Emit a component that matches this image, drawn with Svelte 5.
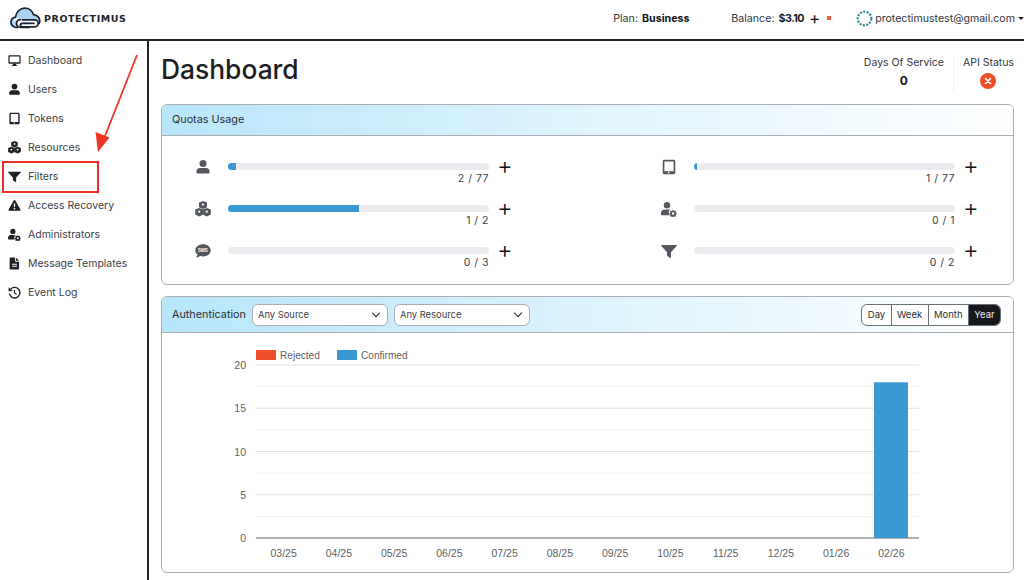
<script lang="ts">
  const nav = [
    { label: "Dashboard", icon: "desktop" },
    { label: "Users", icon: "user" },
    { label: "Tokens", icon: "tablet" },
    { label: "Resources", icon: "cubes" },
    { label: "Filters", icon: "filter" },
    { label: "Access Recovery", icon: "warning" },
    { label: "Administrators", icon: "usercog" },
    { label: "Message Templates", icon: "file" },
    { label: "Event Log", icon: "history" },
  ];

  const quotas = [
    { icon: "user", used: 2, total: 77, pct: 3 },
    { icon: "tablet", used: 1, total: 77, pct: 1.3 },
    { icon: "cubes", used: 1, total: 2, pct: 50 },
    { icon: "usercog", used: 0, total: 1, pct: 0 },
    { icon: "sms", used: 0, total: 3, pct: 0 },
    { icon: "filter", used: 0, total: 2, pct: 0 },
  ];

  const ranges = ["Day", "Week", "Month", "Year"];
  const months = ["03/25", "04/25", "05/25", "06/25", "07/25", "08/25", "09/25", "10/25", "11/25", "12/25", "01/26", "02/26"];

  // chart geometry, in the svg's own units
  const plotLeft = 94;
  const plotWidth = 663;
  const plotTop = 32;
  const plotHeight = 173;
  const band = plotWidth / months.length;
  const yOf = (v: number) => plotTop + plotHeight - (v / 20) * plotHeight;
  const grid = [0, 2.5, 5, 7.5, 10, 12.5, 15, 17.5, 20];
</script>

{#snippet icon(name: string)}
  <svg class="icon" viewBox="0 0 16 16" aria-hidden="true">
    {#if name === "desktop"}
      <path d="M1.6 1.5h12.8c.6 0 1.1.5 1.1 1.1v8.3c0 .6-.5 1.1-1.1 1.100H1.600c-.6 0-1.100-.5-1.100-1.100V2.600c0-.6.5-1.100 1.100-1.100zm.4 1.600v6.900h12V3.100z" fill-rule="evenodd" />
      <path d="M6.200 12h3.600l.4 1.800h1.300v1H4.500v-1h1.300z" />
    {:else if name === "user"}
      <circle cx="8" cy="4.400" r="3.500" />
      <path d="M4.800 9h6.400c1.900 0 3.300 1.500 3.300 3.300v1.200c0 .6-.5 1.100-1.100 1.100H2.600c-.6 0-1.100-.5-1.100-1.100v-1.200C1.500 10.500 2.900 9 4.800 9z" />
    {:else if name === "tablet"}
      <path d="M3.300.8h9.400c.9 0 1.600.7 1.600 1.600v11.200c0 .9-.7 1.600-1.600 1.600H3.300c-.9 0-1.600-.7-1.600-1.600V2.400c0-.9.7-1.600 1.600-1.600zm.1 1.700v9.800h9.200V2.500zM8 12.800a.8.800 0 1 0 0 1.500.8.800 0 0 0 0-1.500z" fill-rule="evenodd" />
    {:else if name === "cubes"}
      <path d="M8 0l4 1.600v4.700L8 8 4 6.300V1.600z" />
      <path d="M4.200 7l4 1.600v4.900l-4 1.900-4-1.900V8.600z" />
      <path d="M11.800 7l4 1.600v4.900l-4 1.900-4-1.900V8.600z" />
      <g fill="#fff"><circle cx="8" cy="3.600" r="1.100" /><circle cx="4.200" cy="10.700" r="1.100" /><circle cx="11.800" cy="10.700" r="1.100" /></g>
    {:else if name === "filter"}
      <path d="M.8 2h14.400c.5 0 .8.600.5 1L10 9.300v5c0 .5-.6.8-1 .5l-2.600-1.800a.7.700 0 0 1-.4-.6V9.300L.3 3c-.3-.4 0-1 .5-1z" />
    {:else if name === "warning"}
      <path d="M8 1.200c.4 0 .8.200 1 .6l6.300 11c.4.700-.1 1.600-1 1.600H1.700c-.9 0-1.400-.9-1-1.600l6.300-11c.2-.4.600-.6 1-.6zM7.100 5.500l.2 4.300h1.400l.2-4.300zM8 10.700a1.050 1.050 0 1 0 0 2.100 1.050 1.050 0 0 0 0-2.100z" fill-rule="evenodd" />
    {:else if name === "usercog"}
      <circle cx="6" cy="4.200" r="3.200" />
      <path d="M3.600 8.500h4.800c.3 0 .6 0 .8.100a3.800 3.800 0 0 0-.5 5.700H1.100c-.6 0-1.100-.5-1.100-1.100v-1.300c0-1.900 1.600-3.400 3.600-3.400z" />
      <path d="M12.300 8.200l.3 1 .9.300.9-.5.900.9-.5.900.3.900 1 .3v1.200l-1 .3-.3.900.5.900-.9.900-.9-.5-.9.300-.3 1H11.400l-.3-1-.9-.3-.9.500-.9-.9.500-.9-.3-.9-1-.3v-1.200l1-.3.3-.9-.5-.9.900-.9.900.5.900-.3.300-1zM11.900 11a1.400 1.400 0 1 0 0 2.800 1.400 1.400 0 0 0 0-2.800z" fill-rule="evenodd" transform="translate(1.600 1.600) scale(.88)" />
    {:else if name === "file"}
      <path d="M3.200.6h5.600v4.200c0 .5.400.9.900.9h3.900v8.500c0 .6-.5 1.200-1.200 1.200H3.200c-.7 0-1.200-.6-1.200-1.200V1.800C2 1.100 2.500.6 3.200.6zM9.900.8l3.600 3.800H9.900zM5 8.400v1.100h6V8.400zm0 2.500V12h6v-1.100z" fill-rule="evenodd" />
    {:else if name === "history"}
      <path d="M3.400 3.700A6.500 6.500 0 1 1 1.700 9.500" fill="none" stroke="currentColor" stroke-width="1.700" />
      <path d="M.8 1.600l5 4.700-5 .3z" />
      <path d="M8 4.700v3.900l2.600 1.600" fill="none" stroke="currentColor" stroke-width="1.500" />
    {:else if name === "sms"}
      <path d="M8 1.300c4.300 0 7.700 2.700 7.700 6.100s-3.400 6.100-7.700 6.100c-1 0-2-.1-2.900-.4-.9.700-2.300 1.500-4 1.500-.2 0-.3-.3-.1-.4.900-.9 1.400-1.900 1.500-2.700C1.100 10.500.3 9 .3 7.400c0-3.400 3.400-6.100 7.700-6.100z" />
      <text x="8" y="9.100" class="sms-text">SMS</text>
    {/if}
  </svg>
{/snippet}

<div class="page">
  <header class="topbar">
    <div class="brand">
      <svg class="logo" width="32" height="23" viewBox="0 0 32 23" aria-hidden="true">
        <path d="M8 20.500H6.500C3.400 20.500 1 18.200 1 15.300c0-2.600 1.900-4.700 4.500-5.100C6 5 10 1.200 14.800 1.200c4.100 0 7.600 2.700 8.700 6.400 3.500.2 6.300 2.900 6.300 6.200 0 1.100-.3 2.200-.9 3.100" fill="#a9d4f2" stroke="#1b2230" stroke-width="1.700" stroke-linejoin="round" />
        <path d="M3 14c1-3 4-4 6-3.500 2 .5 2 3 5 3h9c2.500 0 4.500 1 4.500 3" fill="#fff" stroke="none" opacity=".8" />
        <path d="M12.500 12.800h12c2.100 0 3.800 1.500 3.800 3.500s-1.700 3.500-3.800 3.500H12.500c-1.200 0-2.100-.8-2.100-1.700 0-1 .9-1.800 2.100-1.800h11.400M19 20.500h-8.500c-2.300 0-4-1.900-4-4.100 0-2.100 1.700-3.800 3.800-3.800" fill="#fff" stroke="#1b2230" stroke-width="1.700" stroke-linecap="round" />
      </svg>
      <span class="wordmark">PROTECTIMUS</span>
    </div>
    <div class="account">
      <div class="plan">Plan: <b>Business</b></div>
      <div class="balance">
        Balance: <b>$3.10</b>
        <span class="plus-small">+</span>
        <span class="red-dot"></span>
      </div>
      <div class="user-menu">
        <svg class="avatar" width="17" height="17" viewBox="0 0 18 18" aria-hidden="true">
          <circle cx="9" cy="9" r="7.200" fill="none" stroke="#3b8a99" stroke-width="2.400" stroke-dasharray="2.200 1.400" />
        </svg>
        <span>protectimustest@gmail.com</span>
        <span class="caret"></span>
      </div>
    </div>
  </header>

  <div class="body">
    <nav class="sidebar">
      {#each nav as item}
        <div class="nav-item">
          <span class="nav-icon">{@render icon(item.icon)}</span>
          <span>{item.label}</span>
        </div>
      {/each}
    </nav>

    <main class="content">
      <div class="title-row">
        <h1>Dashboard</h1>
        <div class="stats">
          <div class="stat">
            <div>Days Of Service</div>
            <div class="stat-value">0</div>
          </div>
          <div class="stat api">
            <div>API Status</div>
            <div class="status-bad">
              <svg width="8" height="8" viewBox="0 0 8 8" aria-hidden="true"><path d="M1.500 1.500l5 5m0-5l-5 5" stroke="#fff" stroke-width="1.600" stroke-linecap="round" /></svg>
            </div>
          </div>
        </div>
      </div>

      <section class="card quotas">
        <div class="card-head">Quotas Usage</div>
        <div class="quota-grid">
          {#each quotas as q}
            <div class="quota">
              <span class="quota-icon">{@render icon(q.icon)}</span>
              <div class="quota-main">
                <div class="track"><div class="fill" style:width="{q.pct}%"></div></div>
                <div class="quota-count">{q.used} / {q.total}</div>
              </div>
              <span class="plus">+</span>
            </div>
          {/each}
        </div>
      </section>

      <section class="card auth">
        <div class="card-head auth-head">
          <span>Authentication</span>
          <div class="select">Any Source<span class="chev"></span></div>
          <div class="select">Any Resource<span class="chev"></span></div>
          <div class="range-group">
            {#each ranges as r}
              <span class="range" class:active={r === "Year"}>{r}</span>
            {/each}
          </div>
        </div>
        <div class="chart">
          <svg width="851" height="240" viewBox="0 0 851 240" aria-label="Authentication chart">
            <rect x="94" y="17" width="20" height="10" fill="#ee4f2b" />
            <text x="118" y="26" class="legend">Rejected</text>
            <rect x="175" y="17" width="20" height="10" fill="#3a98d3" />
            <text x="199" y="26" class="legend">Confirmed</text>
            {#each grid as v, i}
              <line x1={plotLeft} x2={plotLeft + plotWidth} y1={yOf(v)} y2={yOf(v)} class={i === 0 ? "axis" : i % 2 === 0 ? "grid major" : "grid"} />
              {#if i % 2 === 0}
                <text x="84" y={yOf(v) + 4} class="tick end">{v}</text>
              {/if}
            {/each}
            {#each months as m, i}
              <text x={plotLeft + band * (i + 0.5)} y="224" class="tick mid">{m}</text>
            {/each}
            <rect x="712" y={yOf(18)} width="34" height={plotTop + plotHeight - yOf(18)} fill="#3a98d3" />
          </svg>
        </div>
      </section>
    </main>
  </div>

  <!-- annotation drawn over the screenshot -->
  <div class="callout"></div>
  <svg class="arrow" width="60" height="115" viewBox="0 0 60 115" aria-hidden="true">
    <path d="M47 3L15 84" stroke="#ee3524" stroke-width="1.800" fill="none" />
    <path d="M8 100L5.500 80 19.500 85.500z" fill="#ee3524" />
  </svg>
</div>

<style>
  :global(body) {
    margin: 0;
    background: #fff;
  }

  .page {
    position: relative;
    width: 1024px;
    height: 580px;
    overflow: hidden;
    font-family: Inter, "Liberation Sans", sans-serif;
    font-size: 10.500px;
    color: #24282e;
    background: #fff;
  }

  .topbar {
    display: flex;
    align-items: center;
    justify-content: space-between;
    height: 39px;
    border-bottom: 2px solid #23262b;
  }

  .brand {
    display: flex;
    align-items: center;
    gap: 2px;
    padding: 0 0 3px 10px;
  }

  .wordmark {
    font-family: "DejaVu Sans", sans-serif;
    font-weight: 700;
    font-size: 9.500px;
    letter-spacing: 0.550px;
    color: #20242c;
  }

  .account {
    display: flex;
    align-items: center;
    padding: 0 0 3px 0;
    color: #33373d;
    font-size: 10.700px;
  }

  .account b {
    color: #16181c;
    font-weight: 700;
    margin-left: 1px;
  }

  .plan {
    width: 118px;
  }

  .balance {
    display: flex;
    align-items: center;
    gap: 3px;
    width: 125px;
  }

  .balance b {
    letter-spacing: -0.500px;
  }

  .plus-small {
    font-size: 17px;
    line-height: 12px;
    color: #111;
    margin-left: 2px;
  }

  .red-dot {
    width: 4px;
    height: 4px;
    background: #ee5a33;
    margin-left: 4px;
  }

  .user-menu {
    display: flex;
    align-items: center;
    gap: 2px;
    font-size: 10.600px;
  }

  .caret {
    width: 0;
    height: 0;
    margin-left: 1px;
    border: 3px solid transparent;
    border-top-color: #222;
    border-bottom: 0;
  }

  .body {
    display: flex;
    height: 539px;
  }

  .sidebar {
    width: 149px;
    flex: none;
    box-sizing: border-box;
    border-right: 2px solid #23262b;
    padding-top: 5px;
  }

  .nav-item {
    display: flex;
    align-items: center;
    height: 29px;
    color: #3c4046;
  }

  .nav-icon {
    display: flex;
    justify-content: center;
    width: 28px;
    flex: none;
    color: #1e2126;
  }

  .icon {
    width: 13px;
    height: 13px;
    fill: currentColor;
  }

  .sms-text {
    font-family: "Liberation Sans", sans-serif;
    font-size: 4.500px;
    font-weight: 700;
    fill: #fff;
    text-anchor: middle;
  }

  .content {
    flex: 1;
    min-width: 0;
    padding: 0 10px 0 12px;
  }

  .title-row {
    display: flex;
    justify-content: space-between;
    height: 63px;
  }

  h1 {
    margin: 10px 0 0;
    font-size: 26.400px;
    line-height: 36px;
    font-weight: 500;
    color: #1b1e23;
  }

  .stats {
    display: flex;
    padding-top: 15px;
    height: 36px;
  }

  .stat {
    text-align: center;
    padding-right: 9px;
    border-right: 1px solid #eef0f2;
    color: #33373d;
  }

  .stat.api {
    padding: 0 0 0 9px;
    border-right: 0;
  }

  .stat-value {
    margin-top: 4px;
    font-size: 12px;
    font-weight: 700;
    color: #16181c;
  }

  .status-bad {
    display: flex;
    align-items: center;
    justify-content: center;
    width: 16px;
    height: 16px;
    margin: 4px auto 0;
    border-radius: 50%;
    background: #ea4f2a;
  }

  .card {
    border: 1px solid #a9adb1;
    border-radius: 6px;
    overflow: hidden;
  }

  .card-head {
    display: flex;
    align-items: center;
    height: 30px;
    padding: 0 10px;
    border-bottom: 1px solid #a9adb1;
    background: linear-gradient(90deg, #b7e6fb 0%, #dff4fd 50%, #ffffff 100%);
    color: #2a2e33;
    font-size: 10.800px;
  }

  .quotas .card-head {
    padding-bottom: 2px;
    box-sizing: border-box;
    height: 31px;
  }

  .quotas {
    height: 179px;
  }

  .quota-grid {
    display: grid;
    grid-template-columns: 466px 1fr;
    row-gap: 17px;
    padding: 24px 0 0 33px;
  }

  .quota {
    display: flex;
    align-items: flex-start;
    height: 25px;
  }

  .quota-icon {
    display: flex;
    justify-content: center;
    width: 16px;
    margin-top: -1px;
    color: #54585e;
  }

  .quota-icon .icon {
    width: 16px;
    height: 16px;
  }

  .quota-main {
    width: 261px;
    margin-left: 17px;
    flex: none;
  }

  .track {
    height: 7px;
    margin-top: 3px;
    border-radius: 4px;
    background: #ececf0;
    overflow: hidden;
  }

  .fill {
    height: 100%;
    background: #3a98d3;
  }

  .quota-count {
    margin-top: 2px;
    text-align: right;
    font-size: 10.500px;
    letter-spacing: 0.500px;
    color: #3c4046;
  }

  .plus {
    margin: -7px 0 0 8px;
    font-size: 24px;
    line-height: 26px;
    font-weight: 300;
    color: #111;
  }

  .auth {
    margin-top: 11px;
    height: 275px;
  }

  .auth-head {
    height: 35px;
    gap: 6px;
    background: linear-gradient(90deg, #b7e6fb 0%, #dff4fd 55%, #ffffff 100%);
  }

  .select {
    display: flex;
    align-items: center;
    justify-content: space-between;
    width: 136px;
    height: 22px;
    box-sizing: border-box;
    padding: 0 6px 0 5px;
    border: 1px solid #a9adb1;
    border-radius: 6px;
    background: #fff;
    font-size: 9.400px;
    color: #3c4046;
  }

  .chev {
    width: 5px;
    height: 5px;
    margin: -3px 2px 0 0;
    border-right: 1.800px solid #222;
    border-bottom: 1.800px solid #222;
    transform: rotate(45deg);
  }

  .range-group {
    display: flex;
    margin-left: auto;
    height: 22px;
    border: 1px solid #6b7075;
    border-radius: 6px;
    overflow: hidden;
    box-sizing: border-box;
    background: #fff;
    margin-right: 2px;
  }

  .range {
    display: flex;
    align-items: center;
    padding: 0 5.400px;
    font-size: 9.500px;
    color: #2a2e33;
    border-left: 1px solid #6b7075;
  }

  .range:first-child {
    border-left: 0;
  }

  .range.active {
    background: #16181c;
    color: #e8eaec;
  }

  .chart {
    height: 240px;
  }

  .chart svg {
    display: block;
  }

  .legend,
  .tick {
    font-family: "Liberation Sans", Arial, sans-serif;
    font-size: 10.500px;
    fill: #5f5f5f;
  }

  .legend {
    font-size: 10.100px;
  }

  .tick.end {
    text-anchor: end;
  }

  .tick.mid {
    text-anchor: middle;
  }

  .grid {
    stroke: #f1f1f3;
    stroke-width: 1;
  }

  .grid.major {
    stroke: #e2e2e5;
  }

  .axis {
    stroke: #666;
    stroke-width: 1;
  }

  .callout {
    position: absolute;
    left: 2px;
    top: 161px;
    width: 97px;
    height: 32px;
    box-sizing: border-box;
    border: 2px solid #ee2e24;
  }

  .arrow {
    position: absolute;
    left: 90px;
    top: 52px;
  }
</style>
